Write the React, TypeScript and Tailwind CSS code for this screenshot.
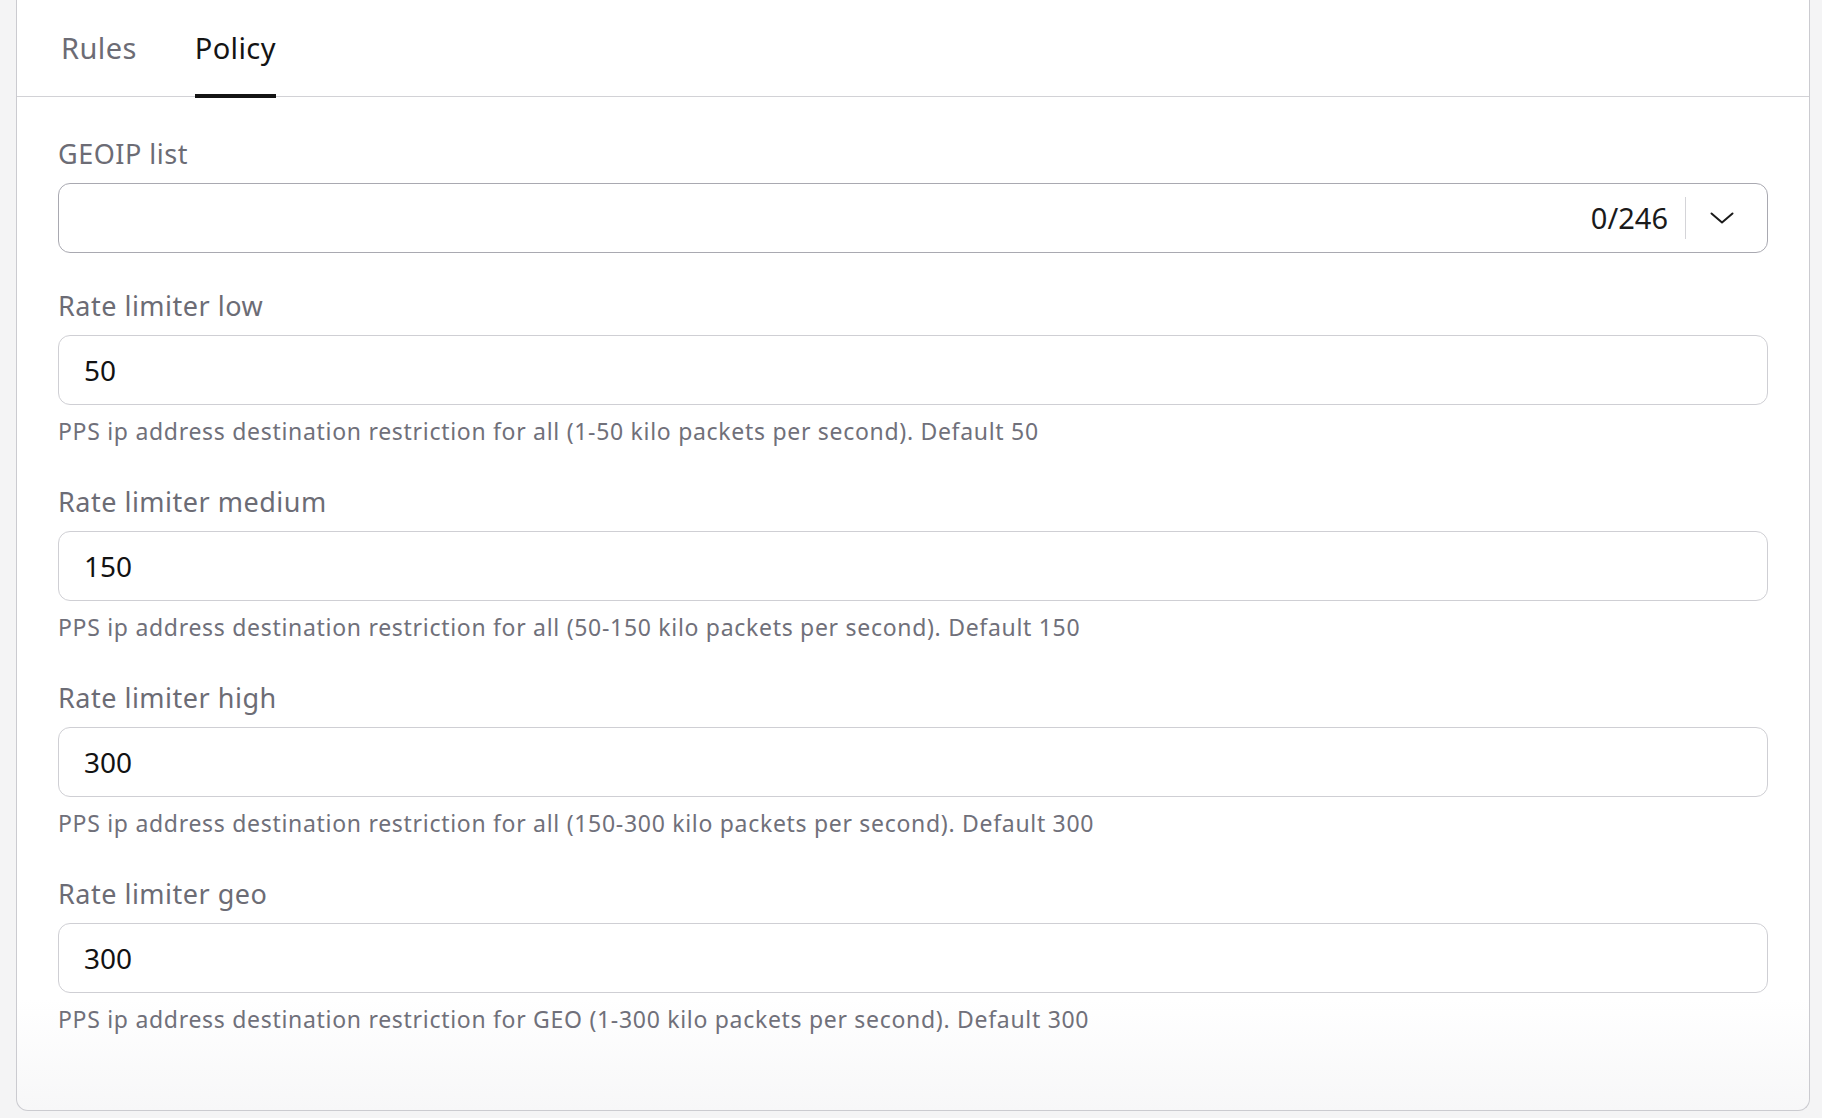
const FIELDS = [
  {
    label: "Rate limiter low",
    value: "50",
    hint: "PPS ip address destination restriction for all (1-50 kilo packets per second). Default 50",
  },
  {
    label: "Rate limiter medium",
    value: "150",
    hint: "PPS ip address destination restriction for all (50-150 kilo packets per second). Default 150",
  },
  {
    label: "Rate limiter high",
    value: "300",
    hint: "PPS ip address destination restriction for all (150-300 kilo packets per second). Default 300",
  },
  {
    label: "Rate limiter geo",
    value: "300",
    hint: "PPS ip address destination restriction for GEO (1-300 kilo packets per second). Default 300",
  },
];

function NumberField({ label, value, hint }: { label: string; value: string; hint: string }) {
  return (
    <div className="mb-[38px] last:mb-0">
      <label className="mb-[11px] block text-[27px] leading-[36px] tracking-[0.5px] text-[#6c6c75]">{label}</label>
      <div className="flex h-[70px] items-center rounded-[12px] border border-[#cfcfd4] bg-white pl-[25px] text-[28px] text-[#121212]">
        {value}
      </div>
      <p className="mt-[11px] text-[23px] leading-[30px] tracking-[0.7px] text-[#70707a]">{hint}</p>
    </div>
  );
}

export default function App() {
  return (
    <div className="min-h-screen bg-[#f4f4f5] pl-[16px] pr-[12px] font-['Noto_Sans',sans-serif]">
      <div className="rounded-b-[12px] border-x border-b border-[#cbcbd0] bg-linear-to-b from-white from-[90%] to-[#f7f7f8]">
        <nav className="flex h-[97px] gap-[58px] border-b border-[#d2d2d6] pl-[44px]">
          <button className="relative flex h-[96px] items-center text-[29px] tracking-[0.4px] text-[#6c6c75]">Rules</button>
          <button className="relative flex h-[96px] items-center text-[29px] tracking-[0.4px] text-[#141414]">
            Policy
            <span className="absolute -bottom-[2px] left-0 right-0 h-[4px] bg-[#141414]" />
          </button>
        </nav>

        <div className="px-[41px] pt-[39px] pb-[76px]">
          <div className="mb-[35px]">
            <label className="mb-[11px] block text-[27px] leading-[36px] tracking-[0.5px] text-[#6c6c75]">GEOIP list</label>
            <div className="flex h-[70px] items-center rounded-[12px] border border-[#a9a9b1] bg-white">
              <div className="flex-1" />
              <span className="text-[29px] text-[#1a1a1a]">0/246</span>
              <span className="ml-[17px] h-[42px] w-px bg-[#d4d4d8]" />
              <svg className="ml-[24px] mr-[33px]" width="24" height="12" viewBox="0 0 24 12" fill="none">
                <path d="M1.5 1.5L12 10.5L22.5 1.5" stroke="#1a1a1a" strokeWidth="2" strokeLinecap="round" strokeLinejoin="round" />
              </svg>
            </div>
          </div>

          {FIELDS.map((f) => (
            <NumberField key={f.label} {...f} />
          ))}
        </div>
      </div>
    </div>
  );
}
